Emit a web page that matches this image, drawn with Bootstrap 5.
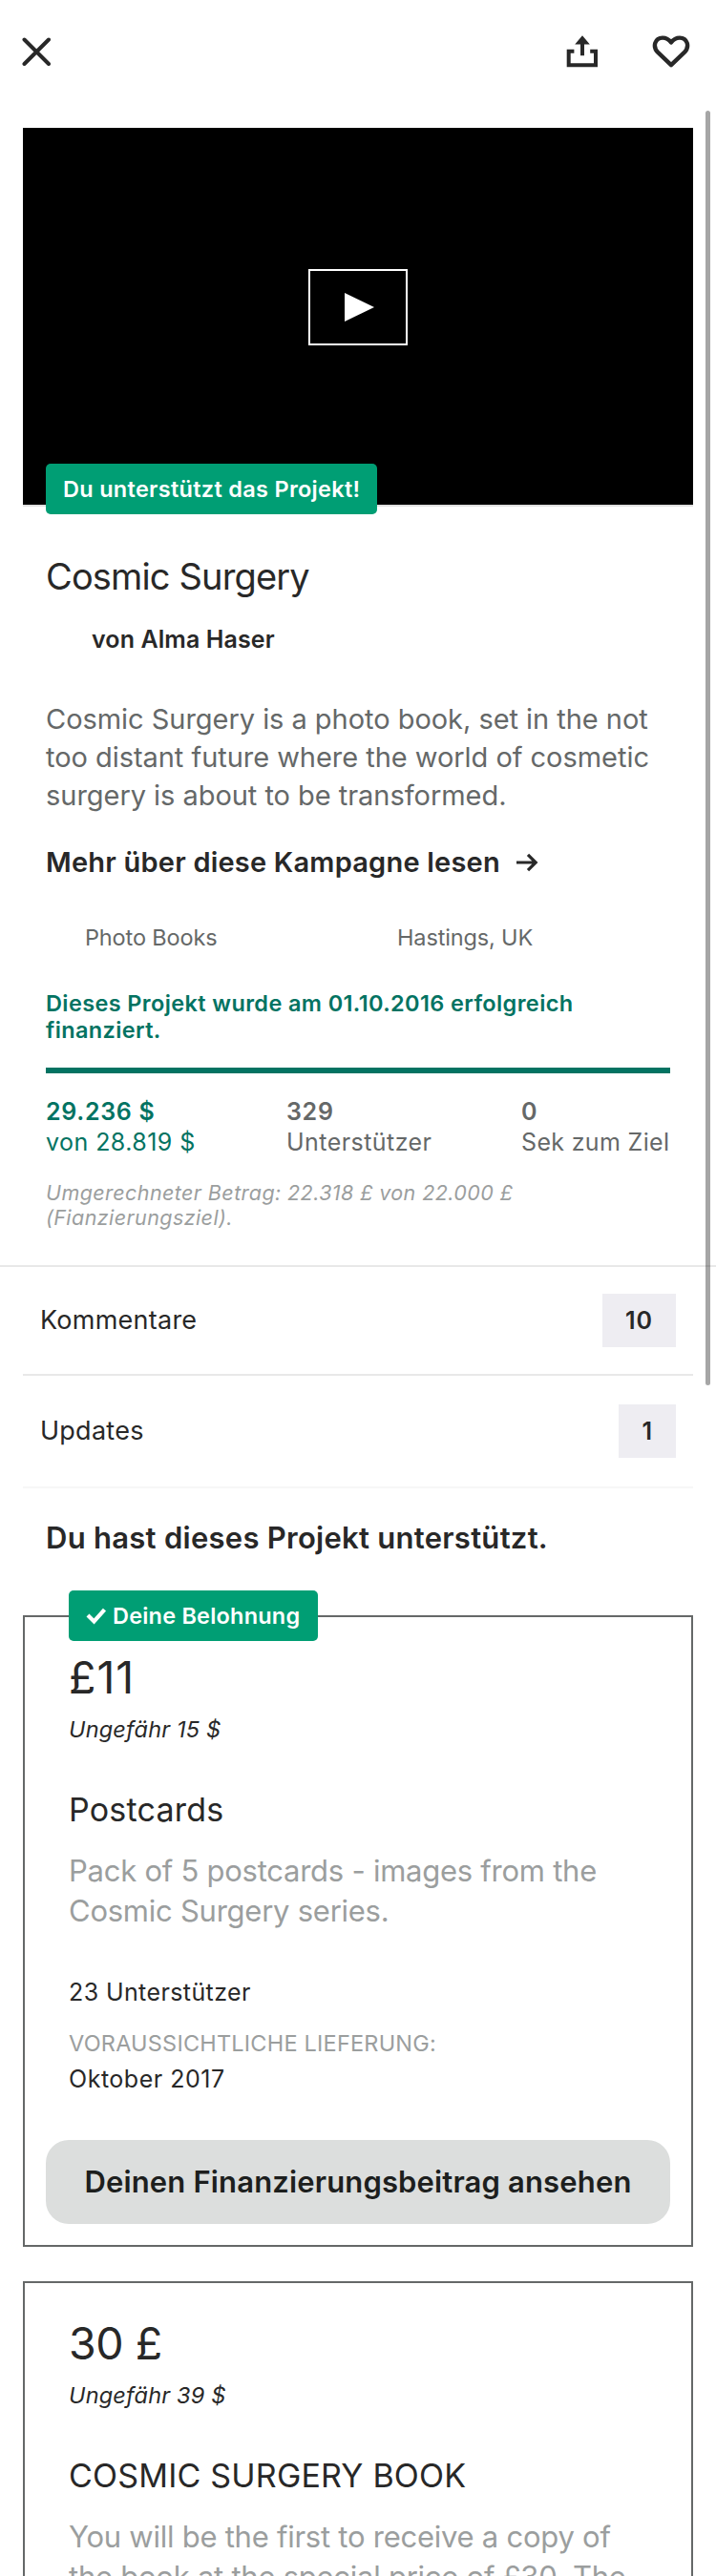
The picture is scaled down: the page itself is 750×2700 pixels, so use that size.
<!DOCTYPE html>
<html lang="de">
<head>
<meta charset="utf-8">
<meta name="viewport" content="width=device-width, initial-scale=1">
<title>Cosmic Surgery</title>
<link href="https://cdn.jsdelivr.net/npm/bootstrap@5.3.0/dist/css/bootstrap.min.css" rel="stylesheet">
<style>
  :root { --ink: #282828; --gray: #656868; --light: #9b9e9e; --green: #037362; --badge: #009e74; }
  body { font-family: Inter, "Liberation Sans", sans-serif; color: var(--ink); background: #fff; font-size: 25px; line-height: 32px; }
  .screen { width: 750px; height: 2700px; }
  .topbar { height: 108px; padding: 0 27px 0 23px; }
  .topbar-actions { gap: 56px; }
  .feed { padding-top: 26px; }
  .video { margin: 0 24px; height: 397px; background: #000; border-bottom: 2px solid #e0e0e0; }
  .play { width: 104px; height: 80px; border: 2.5px solid #fff; margin-bottom: 19px; }
  .flag { height: 53px; background: var(--badge); color: #fff; border-radius: 5px; font-size: 23.5px; font-weight: 600; line-height: 53px; white-space: nowrap; }
  .flag-video { left: 24px; bottom: -10px; width: 347px; padding-left: 18px; letter-spacing: .3px; }
  .flag-reward { left: 46px; top: -28px; width: 261px; padding-left: 18px; gap: 6px; letter-spacing: .2px; }
  .story { padding: 49px 48px 37px; }
  .title-main { font-size: 38px; line-height: 48px; letter-spacing: -.85px; font-weight: 400; margin: 0; }
  .author { margin-top: 26px; padding-left: 48px; font-weight: 600; letter-spacing: .1px; }
  .blurb { margin-top: 48px; font-size: 29px; line-height: 40px; color: var(--gray); letter-spacing: -.04px; white-space: nowrap; }
  .more { margin-top: 32px; font-size: 29px; line-height: 36px; font-weight: 600; letter-spacing: .21px; color: var(--ink); }
  .facts { margin-top: 46px; font-size: 23.5px; line-height: 30px; color: var(--gray); letter-spacing: -.14px; }
  .facts .col-6 { padding-left: 41px; }
  .status { margin-top: 40px; font-size: 23.5px; line-height: 28px; font-weight: 600; color: var(--green); letter-spacing: .38px; }
  .funded { margin-top: 25px; height: 6px; border-radius: 0; --bs-progress-bar-bg: var(--green); }
  .stats { margin-top: 24px; color: var(--gray); letter-spacing: .45px; white-space: nowrap; }
  .stats b { font-weight: 600; letter-spacing: .7px; }
  .stat-pledged { width: 252px; color: var(--green); }
  .stat-backers { width: 246px; }
  .stat-time { letter-spacing: .34px; }
  .converted { margin-top: 24px; font-size: 21.5px; line-height: 26px; font-style: italic; color: var(--light); letter-spacing: .42px; }
  .menu { border-top: 2px solid #e8e8e8; padding: 0 24px; }
  .menu-row { padding: 0 18px; font-size: 27px; height: 114px; border-bottom: 2px solid #e8e8e8; letter-spacing: .25px; }
  .menu-row:last-child { height: 118px; border-color: #f7f7f7; }
  .count { height: 56px; line-height: 56px; padding: 0 24px; background: #eeedf2; font-size: 25px; font-weight: 600; letter-spacing: 1px; text-align: center; }
  .backed { margin: 32px 48px 61px; font-size: 31px; line-height: 40px; font-weight: 600; letter-spacing: .27px; }
  .reward { margin: 0 24px 36px; border: 2px solid var(--gray); padding: 35px 22px 22px; }
  .reward-text { padding: 0 24px; }
  .price { font-size: 46.5px; line-height: 56px; letter-spacing: -.5px; }
  .price-wide { letter-spacing: 1px; }
  .approx { margin-top: 12px; font-size: 23.5px; line-height: 30px; font-style: italic; letter-spacing: .18px; }
  .reward-name { margin: 47px 0 0; font-size: 34px; line-height: 44px; font-weight: 400; letter-spacing: .2px; }
  .reward-info { margin-top: 21px; font-size: 31px; line-height: 42px; color: var(--light); letter-spacing: -.25px; white-space: nowrap; }
  .backers { margin-top: 48px; letter-spacing: .4px; }
  .delivery-label { margin-top: 23px; font-size: 23.5px; line-height: 30px; color: var(--light); letter-spacing: .21px; }
  .delivery { margin-top: 6px; letter-spacing: .52px; }
  .btn-view { margin-top: 48px; height: 88px; border: 0; border-radius: 24px; background: #dcdedd; color: #1d1f1e; font-size: 31px; font-weight: 600; letter-spacing: .15px; padding: 0; }
  .scroll-thumb { left: 739px; top: 116px; width: 5px; height: 1336px; border-radius: 3px; background: rgba(0,0,0,.35); }
</style>
</head>
<body>
<div class="screen position-relative overflow-hidden">
  <header class="topbar d-flex align-items-center justify-content-between">
    <svg width="30" height="30" viewBox="0 0 30 30" fill="none" stroke="#282828" stroke-width="4" stroke-linecap="round"><path d="M2.5 2.5 28 28M28 2.5 2.5 28"/></svg>
    <div class="topbar-actions d-flex align-items-center">
      <svg width="34" height="34" viewBox="0 0 34 34" fill="#282828"><path d="M17 .3 24.8 9.5H19V21.2H15V9.5H9.2Z"/><path d="M8.4 14.7V18.7H4.7V29.3H29V18.7H25.2V14.7H33V33.3H.7V14.7Z"/></svg>
      <svg width="40" height="34" viewBox="0 0 40 34" fill="none" stroke="#282828" stroke-width="4.4" stroke-linejoin="round"><path d="M20 31.2 6.4 18.2C-.2 11.6 3.4 2.6 11 2.6c4 0 6.8 1.9 9 4.9 2.2-3 5-4.9 9-4.9 7.6 0 11.2 9 4.6 15.6Z"/></svg>
    </div>
  </header>

  <main class="feed">
    <div class="video position-relative d-flex align-items-center justify-content-center">
      <div class="play d-flex align-items-center justify-content-center">
        <svg width="34" height="30" viewBox="0 0 34 30"><path d="M3 0 34 15 3 30Z" fill="#fff"/></svg>
      </div>
      <div class="flag flag-video position-absolute">Du unterstützt das Projekt!</div>
    </div>

    <section class="story">
      <h1 class="title-main">Cosmic Surgery</h1>
      <div class="author">von Alma Haser</div>
      <div class="blurb">Cosmic Surgery is a photo book, set in the not<br>too distant future where the world of cosmetic<br>surgery is about to be transformed.</div>
      <a class="more d-flex align-items-center text-decoration-none" href="#">Mehr über diese Kampagne lesen
        <svg class="ms-3" width="24" height="20" viewBox="0 0 24 20" fill="none" stroke="#282828" stroke-width="3.2"><path d="M1 10H21M13 1.8 21.2 10 13 18.2"/></svg></a>
      <div class="facts row g-0">
        <div class="col-6">Photo Books</div>
        <div class="col-6">Hastings, UK</div>
      </div>
      <div class="status">Dieses Projekt wurde am 01.10.2016 erfolgreich<br>finanziert.</div>
      <div class="funded progress"><div class="progress-bar w-100"></div></div>
      <div class="stats d-flex">
        <div class="stat-pledged"><b>29.236 $</b><br>von 28.819 $</div>
        <div class="stat-backers"><b>329</b><br>Unterstützer</div>
        <div class="stat-time"><b>0</b><br>Sek zum Ziel</div>
      </div>
      <div class="converted">Umgerechneter Betrag: 22.318 £ von 22.000 £<br>(Fianzierungsziel).</div>
    </section>

    <nav class="menu">
      <div class="menu-row d-flex align-items-center justify-content-between">Kommentare<span class="count">10</span></div>
      <div class="menu-row d-flex align-items-center justify-content-between">Updates<span class="count">1</span></div>
    </nav>

    <h2 class="backed">Du hast dieses Projekt unterstützt.</h2>

    <article class="reward position-relative">
      <div class="flag flag-reward position-absolute d-flex align-items-center">
        <svg width="22" height="18" viewBox="0 0 22 18" fill="none" stroke="#fff" stroke-width="4.2"><path d="M2 8 8.5 14.5 19.5 2.2"/></svg>
        <span>Deine Belohnung</span>
      </div>
      <div class="reward-text">
        <div class="price price-wide">£11</div>
        <div class="approx">Ungefähr 15 $</div>
        <h3 class="reward-name">Postcards</h3>
        <div class="reward-info">Pack of 5 postcards - images from the<br>Cosmic Surgery series.</div>
        <div class="backers">23 Unterstützer</div>
        <div class="delivery-label">VORAUSSICHTLICHE LIEFERUNG:</div>
        <div class="delivery">Oktober 2017</div>
      </div>
      <button class="btn btn-view w-100" type="button">Deinen Finanzierungsbeitrag ansehen</button>
    </article>

    <article class="reward">
      <div class="reward-text">
        <div class="price">30 £</div>
        <div class="approx">Ungefähr 39 $</div>
        <h3 class="reward-name">COSMIC SURGERY BOOK</h3>
        <div class="reward-info">You will be the first to receive a copy of<br>the book at the special price of £30. The</div>
      </div>
    </article>
  </main>
  <div class="scroll-thumb position-absolute"></div>
</div>
<script src="https://cdn.jsdelivr.net/npm/bootstrap@5.3.0/dist/js/bootstrap.bundle.min.js"></script>
</body>
</html>
